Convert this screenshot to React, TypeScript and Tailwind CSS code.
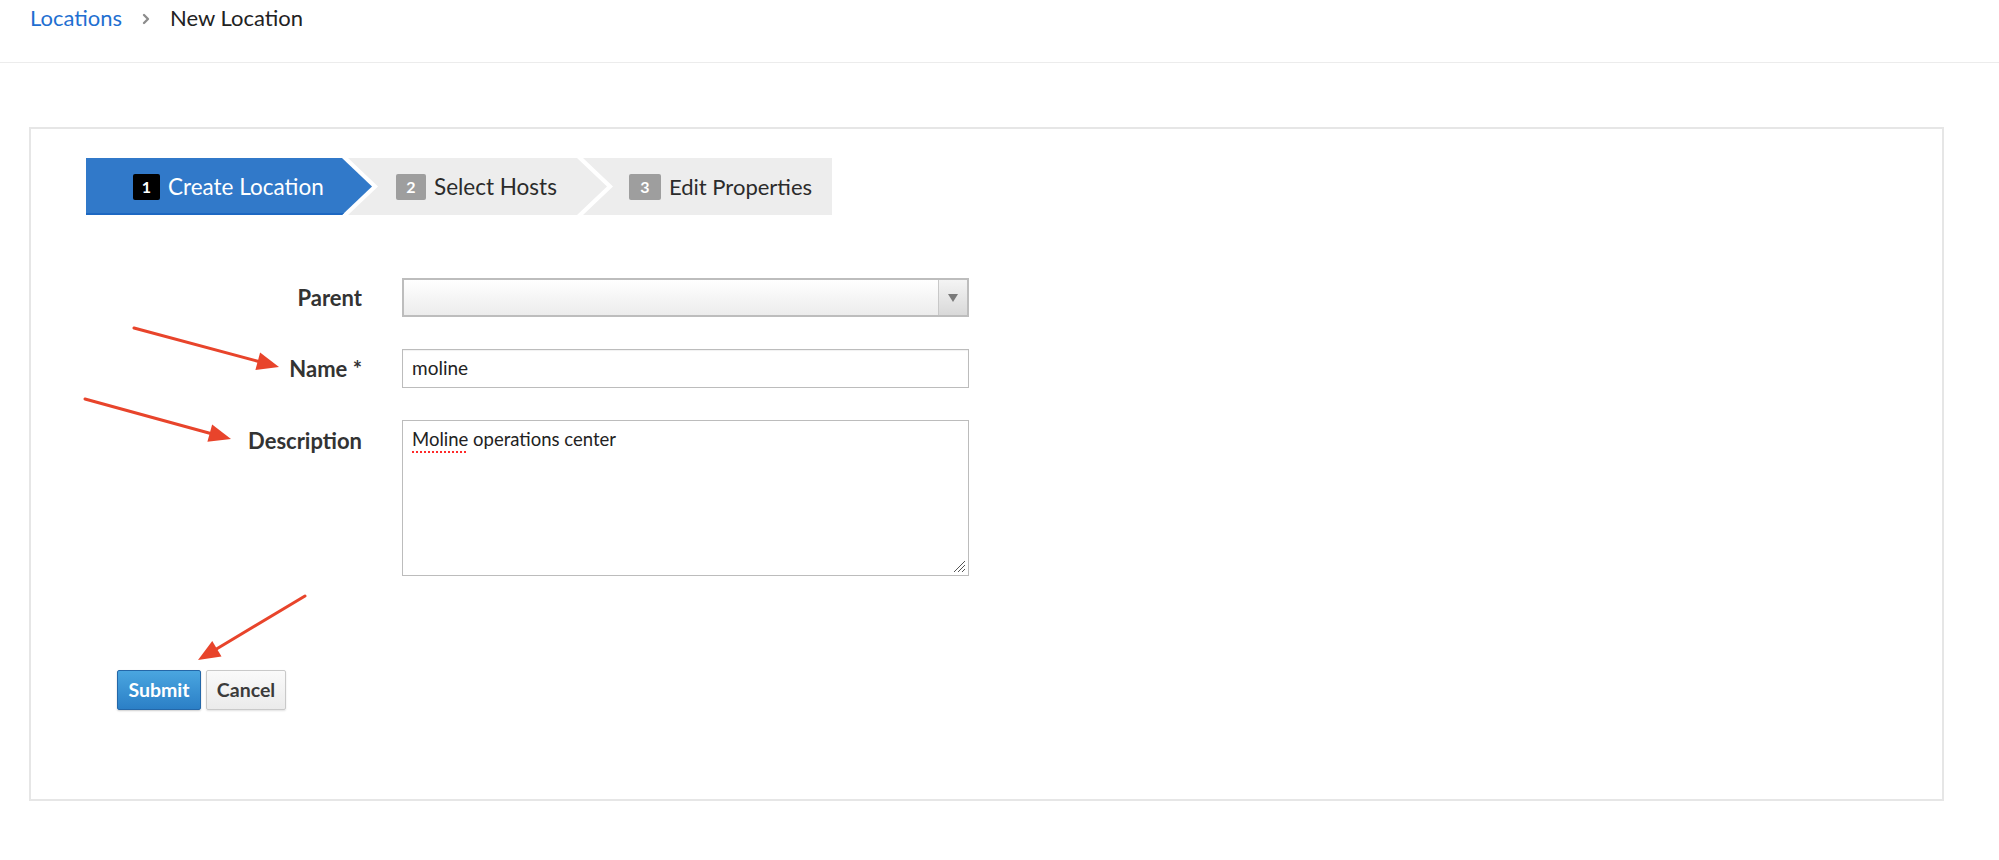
import { ChevronRight } from "lucide-react";

// annotation arrow: straight shaft with a filled head at the tip
function Arrow({ x1, y1, x2, y2 }: { x1: number; y1: number; x2: number; y2: number }) {
  const ang = Math.atan2(y2 - y1, x2 - x1);
  const len = 22;
  const half = 9;
  const bx = x2 - Math.cos(ang) * len;
  const by = y2 - Math.sin(ang) * len;
  const px = -Math.sin(ang) * half;
  const py = Math.cos(ang) * half;
  const head = `${x2},${y2} ${bx + px},${by + py} ${bx - px},${by - py}`;
  return (
    <g>
      <line x1={x1} y1={y1} x2={bx} y2={by} stroke="#e8442b" strokeWidth={3} strokeLinecap="round" />
      <polygon points={head} fill="#e8442b" />
    </g>
  );
}

export default function App() {
  return (
    <div className="relative h-[860px] w-full overflow-hidden bg-white font-['Lato',sans-serif] text-[#333]">
      {/* breadcrumb */}
      <div className="flex h-[63px] items-start border-b border-[#ececec] pl-[30px] pt-[5px] text-[22px] leading-[26px]">
        <span className="text-[#1f6fd1]">Locations</span>
        <ChevronRight className="mx-[16px] mt-[6px] text-[#8c8c8c]" size={16} strokeWidth={3.5} />
        <span className="text-[#222]">New Location</span>
      </div>

      {/* card */}
      <div className="ml-[29px] mt-[64px] h-[674px] w-[1915px] border-2 border-[#e6e6e6] pl-[55px] pt-[29px]">
        {/* wizard steps */}
        <div className="flex h-[57px] w-max">
          <div className="flex h-full w-[286px] items-center bg-[#3179c9] pl-[47px] text-white shadow-[inset_0_-2px_0_#1d68c2] [clip-path:polygon(0_0,256px_0,286px_50%,256px_100%,0_100%)]">
            <span className="mr-[8px] flex h-[26px] w-[27px] items-center justify-center rounded-[2px] bg-black text-[16px] font-bold">1</span>
            <span className="text-[22.5px]">Create Location</span>
          </div>
          <div className="ml-[-24px] flex h-full w-[259px] items-center bg-[#ededed] pl-[48px] text-[#2b2b2b] [clip-path:polygon(0_0,229px_0,259px_50%,229px_100%,0_100%,30px_50%)]">
            <span className="mr-[8px] flex h-[26px] w-[30px] items-center justify-center rounded-[2px] bg-[#9e9e9e] text-[16px] font-bold text-white">2</span>
            <span className="text-[22.5px]">Select Hosts</span>
          </div>
          <div className="ml-[-24px] flex h-full w-[249px] items-center bg-[#ededed] pl-[46px] text-[#2b2b2b] [clip-path:polygon(0_0,100%_0,100%_100%,0_100%,30px_50%)]">
            <span className="mr-[8px] flex h-[26px] w-[32px] items-center justify-center rounded-[2px] bg-[#9e9e9e] text-[16px] font-bold text-white">3</span>
            <span className="text-[22px]">Edit Properties</span>
          </div>
        </div>

        {/* form */}
        <div className="mt-[63px] flex flex-col gap-[32px]">
          <div className="flex items-center">
            <label className="w-[276px] text-right text-[22px] font-bold leading-[26px]">Parent</label>
            <div className="ml-[40px] flex h-[39px] w-[567px] border-2 border-[#bdbdbd] bg-gradient-to-b from-white to-[#ececec]">
              <div className="flex-1" />
              <div className="flex w-[29px] items-center justify-center border-l border-[#c8c8c8] bg-gradient-to-b from-[#f4f4f4] to-[#d9d9d9]">
                <svg width="10" height="8" viewBox="0 0 10 8">
                  <polygon points="0,0 10,0 5,8" fill="#7a7a7a" />
                </svg>
              </div>
            </div>
          </div>

          <div className="flex items-center">
            <label className="w-[276px] text-right text-[22px] font-bold leading-[26px]">Name *</label>
            <div className="ml-[40px] flex h-[39px] w-[567px] items-center border border-[#bcbcbc] px-[9px] text-[19px] text-[#222] shadow-[inset_0_1px_1px_rgba(0,0,0,0.06)]">
              moline
            </div>
          </div>

          <div className="flex items-start">
            <label className="w-[276px] pt-[8px] text-right text-[22px] font-bold leading-[26px]">Description</label>
            <div className="relative ml-[40px] h-[156px] w-[567px] border border-[#bcbcbc] px-[9px] pt-[5px] text-[18.5px] leading-[26px] text-[#222]">
              <span className="underline decoration-[#ff2a2a] decoration-dotted decoration-2 underline-offset-[5px]">Moline</span> operations center
              <svg className="absolute bottom-[2px] right-[2px]" width="14" height="14" viewBox="0 0 14 14">
                <line x1="13" y1="2" x2="2" y2="13" stroke="#555" strokeWidth="1" />
                <line x1="13" y1="6" x2="6" y2="13" stroke="#555" strokeWidth="1" />
                <line x1="13" y1="10" x2="10" y2="13" stroke="#555" strokeWidth="1" />
              </svg>
            </div>
          </div>
        </div>

        {/* actions */}
        <div className="ml-[31px] mt-[94px] flex gap-[5px]">
          <button className="h-[40px] w-[84px] rounded-[2px] border border-[#2467a8] bg-gradient-to-b from-[#4aa6e0] to-[#2b7fc6] text-[19.5px] font-bold text-white shadow-[0_1px_2px_rgba(0,0,0,0.2)]">
            Submit
          </button>
          <button className="h-[40px] w-[80px] rounded-[2px] border border-[#c9c9c9] bg-gradient-to-b from-[#fafafa] to-[#ebebeb] text-[19.5px] font-bold text-[#3b3b3b] shadow-[0_1px_2px_rgba(0,0,0,0.12)]">
            Cancel
          </button>
        </div>
      </div>

      {/* red annotation arrows */}
      <svg className="pointer-events-none absolute left-0 top-0" width="1999" height="860">
        <Arrow x1={134} y1={328} x2={279} y2={367} />
        <Arrow x1={85} y1={399} x2={231} y2={439} />
        <Arrow x1={305} y1={596} x2={198} y2={660} />
      </svg>
    </div>
  );
}
